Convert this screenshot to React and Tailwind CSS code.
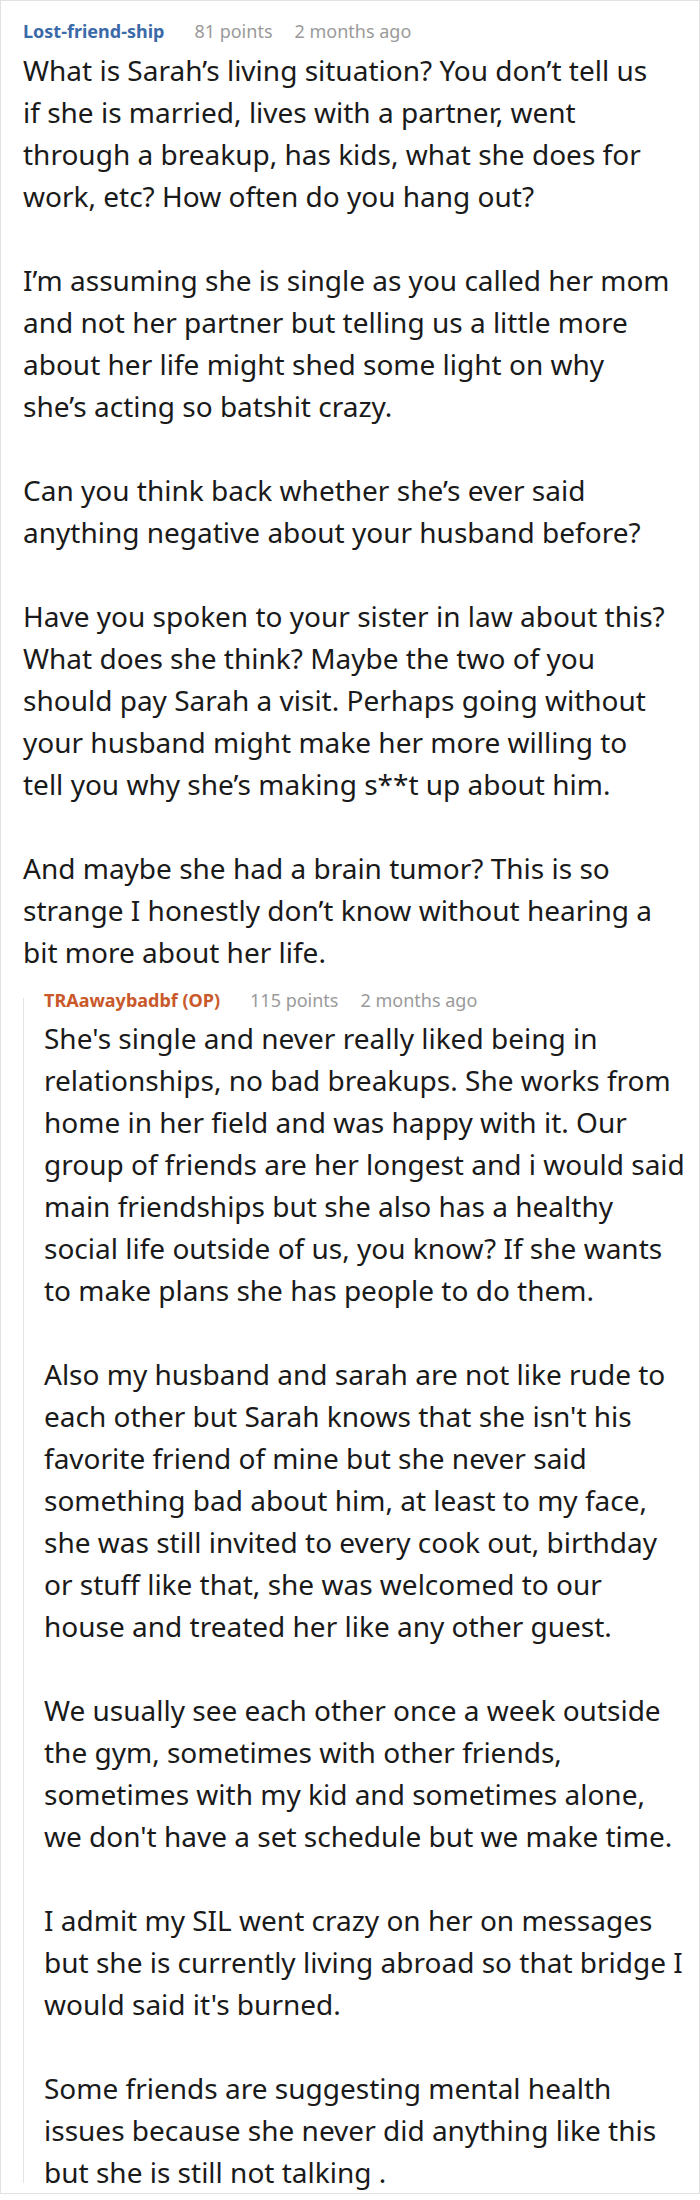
import React from 'react';

// each paragraph is kept as the lines of the original screenshot
const mainText = [
  [
    'What is Sarah’s living situation? You don’t tell us',
    'if she is married, lives with a partner, went',
    'through a breakup, has kids, what she does for',
    'work, etc? How often do you hang out?',
  ],
  [
    'I’m assuming she is single as you called her mom',
    'and not her partner but telling us a little more',
    'about her life might shed some light on why',
    'she’s acting so batshit crazy.',
  ],
  [
    'Can you think back whether she’s ever said',
    'anything negative about your husband before?',
  ],
  [
    'Have you spoken to your sister in law about this?',
    'What does she think? Maybe the two of you',
    'should pay Sarah a visit. Perhaps going without',
    'your husband might make her more willing to',
    'tell you why she’s making s**t up about him.',
  ],
  [
    'And maybe she had a brain tumor? This is so',
    'strange I honestly don’t know without hearing a',
    'bit more about her life.',
  ],
];

const replyText = [
  [
    "She's single and never really liked being in",
    'relationships, no bad breakups. She works from',
    'home in her field and was happy with it. Our',
    'group of friends are her longest and i would said',
    'main friendships but she also has a healthy',
    'social life outside of us, you know? If she wants',
    'to make plans she has people to do them.',
  ],
  [
    'Also my husband and sarah are not like rude to',
    "each other but Sarah knows that she isn't his",
    'favorite friend of mine but she never said',
    'something bad about him, at least to my face,',
    'she was still invited to every cook out, birthday',
    'or stuff like that, she was welcomed to our',
    'house and treated her like any other guest.',
  ],
  [
    'We usually see each other once a week outside',
    'the gym, sometimes with other friends,',
    'sometimes with my kid and sometimes alone,',
    "we don't have a set schedule but we make time.",
  ],
  [
    'I admit my SIL went crazy on her on messages',
    'but she is currently living abroad so that bridge I',
    "would said it's burned.",
  ],
  [
    'Some friends are suggesting mental health',
    'issues because she never did anything like this',
    'but she is still not talking .',
  ],
];

const CommentHeader = ({ name, points, time, color }) => (
  <div className="flex items-baseline text-[18px] leading-[26px]">
    <span className={`font-bold ${color}`}>{name}</span>
    <span className="ml-[30px] text-[#9a9a9a]">{points}</span>
    <span className="ml-[22px] text-[#9a9a9a]">{time}</span>
  </div>
);

const Body = ({ paragraphs }) => (
  <div className="flex flex-col gap-[42px] text-[28px] leading-[42px] text-[#1a1a1a]">
    {paragraphs.map((lines, i) => (
      <p key={i}>
        {lines.map((line, j) => (
          <span key={j} className="block whitespace-nowrap">
            {line}
          </span>
        ))}
      </p>
    ))}
  </div>
);

export default function App() {
  return (
    <div className="w-[700px] bg-white" style={{ fontFamily: '"Noto Sans", "Open Sans", sans-serif' }}>
      <div className="border border-[#e2e2e2] pl-[22px] pr-[21px] pt-[17px]">
        {/* Top comment */}
        <CommentHeader name="Lost-friend-ship" points="81 points" time="2 months ago" color="text-[#3b6aa8]" />
        <div className="mt-[5px]">
          <Body paragraphs={mainText} />
        </div>

        {/* OP reply */}
        <div className="relative mt-[14px] pl-[21px] before:absolute before:left-0 before:top-[11px] before:bottom-[10px] before:w-px before:bg-[#e4e4e4] before:content-['']">
          <CommentHeader name="TRAawaybadbf (OP)" points="115 points" time="2 months ago" color="text-[#c9592a]" />
          <div className="mt-[4px]">
            <Body paragraphs={replyText} />
          </div>
        </div>
      </div>
    </div>
  );
}
